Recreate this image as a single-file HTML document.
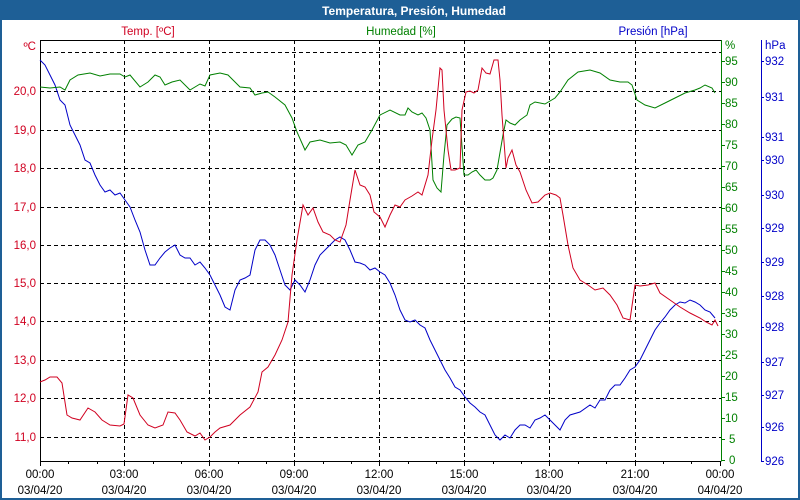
<!DOCTYPE html>
<html><head><meta charset="utf-8"><style>
html,body{margin:0;padding:0;width:800px;height:500px;overflow:hidden;background:#fff}
svg{display:block}
text{font-family:"Liberation Sans","DejaVu Sans",sans-serif;font-size:11.5px}
</style></head><body>
<svg width="800" height="500" xmlns="http://www.w3.org/2000/svg">
<rect x="0" y="0" width="800" height="500" fill="#1e5f96"/>
<rect x="2" y="20" width="796" height="478" fill="#fff"/>
<text x="414" y="15" fill="#fff" font-weight="bold" text-anchor="middle" style="font-size:12px">Temperatura, Presión, Humedad</text>
<text x="148" y="35" fill="#d00020" text-anchor="middle">Temp. [ºC]</text>
<text x="401" y="35" fill="#008000" text-anchor="middle">Humedad [%]</text>
<text x="653" y="35" fill="#0000c8" text-anchor="middle">Presión [hPa]</text>
<g stroke="#000" stroke-dasharray="4,3" stroke-width="1">
<path d="M40 52.5H721M40 91.5H721M40 130.5H721M40 168.5H721M40 207.5H721M40 245.5H721M40 283.5H721M40 321.5H721M40 360.5H721M40 398.5H721M40 437.5H721"/>
<path d="M124.5 40V461M209.5 40V461M294.5 40V461M379.5 40V461M464.5 40V461M549.5 40V461M635.5 40V461"/>
</g>
<path d="M40.5 40V461.5H721M40 40.5H721" stroke="#000" fill="none"/>
<g stroke="#000"><path d="M40.5 461v5M68.5 461v3M97.5 461v3M124.5 461v5M153.5 461v3M181.5 461v3M209.5 461v5M238.5 461v3M266.5 461v3M294.5 461v5M323.5 461v3M351.5 461v3M379.5 461v5M408.5 461v3M436.5 461v3M464.5 461v5M493.5 461v3M521.5 461v3M549.5 461v5M578.5 461v3M606.5 461v3M635.5 461v5M663.5 461v3M691.5 461v3M720.5 461v5"/></g>
<path d="M721.5 40V461.5" stroke="#008000"/>
<path d="M761.5 40V461.5" stroke="#0000c8"/>
<g fill="#d00020" text-anchor="end">
<text x="36" y="50">ºC</text>
<text x="36" y="95">20,0</text><text x="36" y="134">19,0</text><text x="36" y="172">18,0</text><text x="36" y="211">17,0</text><text x="36" y="249">16,0</text><text x="36" y="287">15,0</text><text x="36" y="325">14,0</text><text x="36" y="364">13,0</text><text x="36" y="402">12,0</text><text x="36" y="441">11,0</text>
</g>
<g stroke="#008000"><path d="M721 61.5h4M721 82.5h4M721 103.5h4M721 124.5h4M721 145.5h4M721 166.5h4M721 187.5h4M721 208.5h4M721 229.5h4M721 250.5h4M721 271.5h4M721 292.5h4M721 313.5h4M721 334.5h4M721 355.5h4M721 376.5h4M721 397.5h4M721 418.5h4M721 439.5h4M721 460.5h4"/></g>
<g fill="#008000">
<text x="725" y="49">%</text>
<text x="725" y="65">95</text><text x="725" y="86">90</text><text x="725" y="107">85</text><text x="725" y="128">80</text><text x="725" y="149">75</text><text x="725" y="170">70</text><text x="725" y="191">65</text><text x="725" y="212">60</text><text x="725" y="233">55</text><text x="725" y="254">50</text><text x="725" y="275">45</text><text x="725" y="296">40</text><text x="725" y="317">35</text><text x="725" y="338">30</text><text x="725" y="359">25</text><text x="725" y="380">20</text><text x="725" y="401">15</text><text x="725" y="422">10</text><text x="729" y="443">5</text><text x="729" y="464">0</text>
</g>
<g stroke="#0000c8"><path d="M761 61.5h3M761 97.5h3M761 137.5h3M761 160.5h3M761 195.5h3M761 228.5h3M761 262.5h3M761 296.5h3M761 327.5h3M761 362.5h3M761 395.5h3M761 427.5h3M761 461.5h3"/></g>
<g fill="#0000c8">
<text x="765" y="49">hPa</text>
<text x="765" y="65">932</text><text x="765" y="101">931</text><text x="765" y="141">931</text><text x="765" y="164">930</text><text x="765" y="199">930</text><text x="765" y="232">929</text><text x="765" y="266">929</text><text x="765" y="300">928</text><text x="765" y="331">928</text><text x="765" y="366">927</text><text x="765" y="399">927</text><text x="765" y="431">926</text><text x="765" y="465">926</text>
</g>
<g fill="#000" text-anchor="middle">
<text x="40" y="478">00:00</text><text x="40" y="494">03/04/20</text>
<text x="124" y="478">03:00</text><text x="124" y="494">03/04/20</text>
<text x="209" y="478">06:00</text><text x="209" y="494">03/04/20</text>
<text x="294" y="478">09:00</text><text x="294" y="494">03/04/20</text>
<text x="379" y="478">12:00</text><text x="379" y="494">03/04/20</text>
<text x="464" y="478">15:00</text><text x="464" y="494">03/04/20</text>
<text x="549" y="478">18:00</text><text x="549" y="494">03/04/20</text>
<text x="635" y="478">21:00</text><text x="635" y="494">03/04/20</text>
<text x="720" y="478">00:00</text><text x="720" y="494">04/04/20</text>
</g>
<g fill="none" stroke-width="1">
<polyline stroke="#0000c8" points="40,60 45,65 50,75 55,85 60,100 65,105 70,125 75,135 80,145 85,160 90,163 95,175 100,185 105,192 110,190 115,195 120,193 125,200 130,207 135,220 140,232 145,250 150,265 155,265 160,258 165,252 170,248 175,245 180,255 185,258 190,258 195,265 200,262 205,268 210,275 215,285 220,295 225,307 230,310 235,290 240,280 245,278 250,275 255,250 260,240 265,240 270,245 275,255 280,270 285,285 290,290 295,280 300,285 305,292 310,280 315,265 320,255 325,250 330,245 335,240 340,237 345,240 350,250 355,262 360,263 365,265 370,270 375,268 380,272 385,275 390,283 395,295 400,310 405,320 410,322 415,320 420,325 425,328 430,340 435,350 440,360 445,370 450,378 455,387 460,390 465,397 470,403 475,407 480,412 485,415 490,425 495,435 500,440 505,435 510,438 515,430 520,425 525,425 530,428 535,420 540,418 545,415 550,420 555,425 560,430 565,420 570,415 580,412 590,405 595,408 600,400 605,400 610,390 615,385 620,385 625,378 630,370 635,367 640,360 645,350 650,340 655,330 660,323 665,317 670,310 675,305 680,302 685,303 690,300 695,302 700,305 705,310 710,312 715,318"/>
<polyline stroke="#008000" points="40,87 50,88 60,87 65,90 70,80 78,75 90,73 100,76 110,74 120,74 125,77 130,75 140,87 148,82 155,75 160,77 165,85 172,82 180,80 190,90 200,84 205,86 210,75 220,73 228,75 235,82 240,87 250,88 255,95 262,93 268,92 275,97 285,105 292,118 297,132 305,150 310,142 320,140 330,143 340,142 346,145 352,155 358,145 365,142 372,130 380,115 390,110 400,115 405,115 408,108 412,112 418,115 422,113 426,118 430,130 433,180 437,188 441,192 444,155 447,125 452,119 456,117 460,118 464,175 468,175 472,172 476,170 480,175 485,180 490,180 493,178 497,170 503,135 506,120 510,123 515,125 520,120 527,115 530,105 535,102 545,104 555,98 560,92 568,80 578,72 590,70 600,73 610,80 620,82 628,82 632,85 637,100 645,105 655,108 665,103 675,98 685,93 695,90 700,88 705,85 712,88 715,93"/>
<polyline stroke="#d00020" points="40,382 45,380 50,377 57,377 62,383 67,415 72,418 80,420 88,408 95,412 102,420 110,425 120,426 124,424 128,395 133,398 140,415 148,425 155,428 163,425 168,412 175,413 180,420 187,432 195,436 200,433 205,440 210,437 215,432 220,428 230,425 240,415 250,407 258,392 262,372 268,367 275,355 282,340 288,322 292,275 297,240 303,205 308,215 313,208 318,222 323,232 330,235 335,240 340,242 346,225 350,200 355,170 360,185 365,187 370,195 374,212 380,217 385,227 390,215 395,205 400,207 405,200 412,196 418,192 422,195 428,175 432,140 436,110 440,68 442,70 444,110 448,150 451,170 455,170 460,168 462,110 466,92 470,91 474,93 478,90 482,68 486,73 490,74 494,60 498,60 500,80 502,115 506,168 508,158 512,150 516,165 520,172 526,190 532,203 538,202 545,195 550,193 556,195 560,198 563,215 568,245 573,268 580,280 588,285 595,290 603,288 610,295 617,305 623,318 630,320 635,285 640,286 648,285 655,283 660,293 670,300 680,307 690,313 700,318 706,322 712,325 715,320 718,326"/>
</g>
</svg>
</body></html>
